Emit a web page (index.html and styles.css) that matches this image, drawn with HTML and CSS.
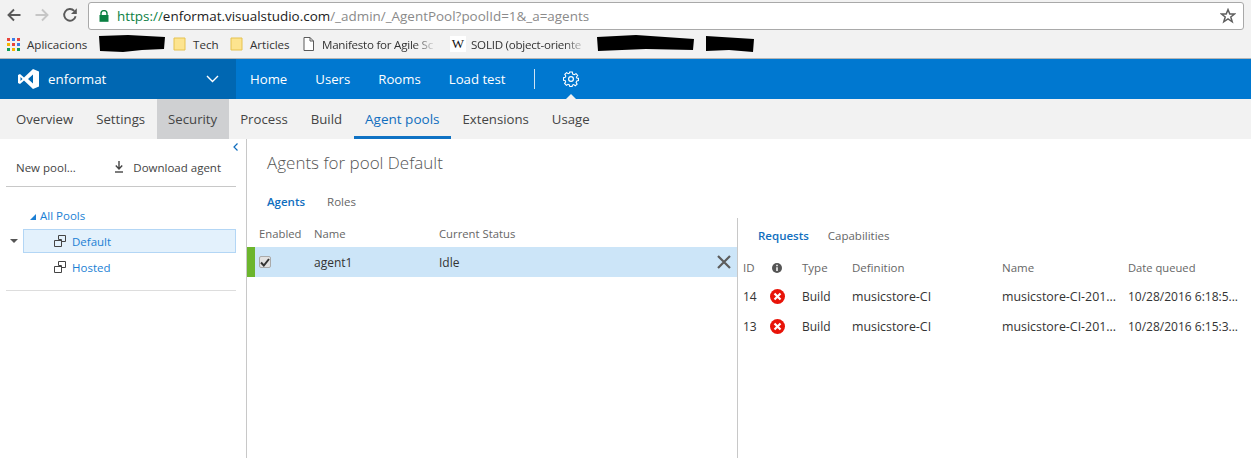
FILE: index.html
```html
<!DOCTYPE html>
<html lang="en">
<head>
    <meta charset="UTF-8">
    <title>Agents for pool Default</title>
    <link rel="stylesheet" href="styles.css">
</head>
<body>
    <!-- Browser toolbar -->
    <div class="toolbar">
        <svg class="tool-icon" width="16" height="16" viewBox="0 0 16 16"><path d="M14.5 8H2.5M8 2.5L2.5 8L8 13.5" fill="none" stroke="#5a5a5a" stroke-width="1.9"/></svg>
        <svg class="tool-icon" width="16" height="16" viewBox="0 0 16 16"><path d="M1.5 8H13.5M8 2.5L13.5 8L8 13.5" fill="none" stroke="#c6c6c6" stroke-width="1.9"/></svg>
        <svg class="tool-icon" width="16" height="16" viewBox="0 0 16 16"><path d="M13.6 9.2A5.8 5.8 0 1 1 12.2 3.9" fill="none" stroke="#5a5a5a" stroke-width="1.9"/><path d="M14.8 1.2V7H9Z" fill="#5a5a5a"/></svg>
        <div class="omnibox">
            <svg class="lock" width="10" height="12" viewBox="0 0 10 12"><path d="M2 5.5V3.6a3 3 0 0 1 6 0V5.5" fill="none" stroke="#0b8043" stroke-width="1.4"/><rect x="0.5" y="5" width="9" height="6.8" fill="#0b8043"/></svg>
            <span class="url"><span class="scheme">https://</span><span class="host">enformat.visualstudio.com</span>/_admin/_AgentPool?poolId=1&amp;_a=agents</span>
            <svg class="star" width="16" height="16" viewBox="0 0 16 16"><path d="M8 1.6L9.8 6H14.6L10.8 9L12.2 13.8L8 11L3.8 13.8L5.2 9L1.4 6H6.2Z" fill="none" stroke="#5f5f5f" stroke-width="1.5"/></svg>
        </div>
    </div>

    <!-- Bookmarks -->
    <div class="bookmarks">
        <svg class="apps" width="13" height="13" viewBox="0 0 13 13">
            <rect width="3" height="3" fill="#e8453c"/><rect x="5" width="3" height="3" fill="#3b7de8"/><rect x="10" width="3" height="3" fill="#e8453c"/>
            <rect y="5" width="3" height="3" fill="#f4b400"/><rect x="5" y="5" width="3" height="3" fill="#e8453c"/><rect x="10" y="5" width="3" height="3" fill="#3b7de8"/>
            <rect y="10" width="3" height="3" fill="#0f9d58"/><rect x="5" y="10" width="3" height="3" fill="#f4b400"/><rect x="10" y="10" width="3" height="3" fill="#0f9d58"/>
        </svg>
        <span class="bm bm-apps">Aplicacions</span>
        <svg class="scribble s1" width="68" height="20" viewBox="0 0 68 20"><path d="M1 2L30 1L67 3L66 15L44 16L25 18L2 17Z"/></svg>
        <svg class="folder f1" width="13" height="14" viewBox="0 0 13 14"><path d="M1 1H12V13H1Z" fill="#fde48f" stroke="#e6c24f"/></svg>
        <span class="bm bm-tech">Tech</span>
        <svg class="folder f2" width="13" height="14" viewBox="0 0 13 14"><path d="M1 1H12V13H1Z" fill="#fde48f" stroke="#e6c24f"/></svg>
        <span class="bm bm-articles">Articles</span>
        <svg class="page" width="11" height="14" viewBox="0 0 11 14"><path d="M1 .5H7L10.500 4V13.500H1ZM7 .5V4H10.500" fill="#fff" stroke="#5a5a5a"/></svg>
        <span class="bm bm-fade bm-manifesto">Manifesto for Agile Sc</span>
        <span class="wiki">W</span>
        <span class="bm bm-fade bm-solid">SOLID (object-oriente</span>
        <svg class="scribble s2" width="100" height="18" viewBox="0 0 100 18"><path d="M1 2L40 0L98 4L97 15L50 14L2 16Z"/></svg>
        <svg class="scribble s3" width="50" height="18" viewBox="0 0 50 18"><path d="M1 1L49 4L48 17L24 15L1 16Z"/></svg>
    </div>

    <!-- Main nav -->
    <div class="topnav">
        <div class="account">
            <svg class="vs-logo" width="21" height="20" viewBox="0 0 21 20"><path d="M15 0L21 2.500V17.500L15 20L6 11.500L2 15L0 14V6L2 5L6 8.500ZM15 5.500L10 10L15 14.500ZM2.500 8V12L4.500 10Z" fill="#fff" fill-rule="evenodd"/></svg>
            <span class="account-name">enformat</span>
            <svg class="account-chevron" width="13" height="8" viewBox="0 0 13 8"><path d="M1 1L6.500 6.500L12 1" fill="none" stroke="#fff" stroke-width="1.4"/></svg>
        </div>
        <a class="topnav-item">Home</a>
        <a class="topnav-item">Users</a>
        <a class="topnav-item">Rooms</a>
        <a class="topnav-item">Load test</a>
        <span class="topnav-sep"></span>
        <div class="topnav-gear">
            <svg width="16" height="16" viewBox="0 0 16 16"><circle cx="8" cy="8" r="2.400" fill="none" stroke="#fff" stroke-width="1.200"/><path d="M6.700 1H9.300L9.700 3L11.300 3.700L13 2.600L14.700 4.500L13.400 6L14 7.200L15.500 7.200V9.600L13.800 10L13.100 11.400L14.100 13.100L12.300 14.700L10.700 13.600L9.400 14.100L9.100 15.500H6.800L6.400 13.900L5 13.300L3.400 14.300L1.600 12.500L2.700 10.900L2.100 9.500L.5 9.200V6.800L2.200 6.400L2.800 5L1.800 3.400L3.600 1.600L5.200 2.700L6.400 2.200Z" fill="none" stroke="#fff" stroke-width="1.100"/></svg>
        </div>
    </div>

    <!-- Sub nav -->
    <div class="subnav">
        <a class="subnav-item">Overview</a>
        <a class="subnav-item">Settings</a>
        <a class="subnav-item hover">Security</a>
        <a class="subnav-item">Process</a>
        <a class="subnav-item">Build</a>
        <a class="subnav-item selected">Agent pools</a>
        <a class="subnav-item">Extensions</a>
        <a class="subnav-item">Usage</a>
    </div>

    <div class="main">
        <!-- Pools tree -->
        <div class="sidebar">
            <div class="collapse"><svg width="5" height="8" viewBox="0 0 5 8"><path d="M4.500 .5L1 4L4.500 7.500" fill="none" stroke="#0f6cbd" stroke-width="1.200"/></svg></div>
            <div class="side-tools">
                <span>New pool...</span>
                <span class="download">
                    <svg width="10" height="12" viewBox="0 0 10 12"><path d="M5 0V7M1.800 4.500L5 8L8.200 4.500" fill="none" stroke="#444" stroke-width="1.400"/><path d="M1 11H9" stroke="#444" stroke-width="1.400"/></svg>
                    Download agent
                </span>
            </div>
            <div class="tree">
                <div class="tree-root"><span class="tree-arrow"></span>All Pools</div>
                <div class="tree-row selected">
                    <span class="tree-toggle"></span>
                    <svg width="12" height="12" viewBox="0 0 12 12"><path d="M4.500 .5H11.500V6.500H7.500V4.500H4.500ZM.5 5.500H7.500V11.500H.5Z" fill="none" stroke="#444"/></svg>
                    Default
                </div>
                <div class="tree-row">
                    <svg width="12" height="12" viewBox="0 0 12 12"><path d="M4.500 .5H11.500V6.500H7.500V4.500H4.500ZM.5 5.500H7.500V11.500H.5Z" fill="none" stroke="#444"/></svg>
                    Hosted
                </div>
            </div>
        </div>

        <div class="content">
            <h1 class="page-title">Agents for pool Default</h1>
            <div class="tabs tabs-agents">
                <span class="tab active">Agents</span>
                <span class="tab">Roles</span>
            </div>
            <div class="panes">
                <!-- Agents grid -->
                <div class="agents">
                    <div class="agent-head">
                        <span class="col-enabled">Enabled</span>
                        <span class="col-name">Name</span>
                        <span>Current Status</span>
                    </div>
                    <div class="agent-row">
                        <span class="col-enabled"><span class="checkbox"><svg width="10" height="9" viewBox="0 0 10 9"><path d="M1 4.500L3.800 7.500L9 1" fill="none" stroke="#333" stroke-width="2"/></svg></span></span>
                        <span class="col-name">agent1</span>
                        <span>Idle</span>
                        <svg class="row-delete" width="14" height="14" viewBox="0 0 14 14"><path d="M1 1L13 13M13 1L1 13" stroke="#5c5c5c" stroke-width="2.200"/></svg>
                    </div>
                </div>

                <!-- Requests grid -->
                <div class="requests">
                    <div class="tabs tabs-requests">
                        <span class="tab active">Requests</span>
                        <span class="tab">Capabilities</span>
                    </div>
                    <table class="req-table">
                        <tr class="req-head">
                            <th class="c-id">ID</th>
                            <th class="c-icon"><svg class="info-icon" width="10" height="10" viewBox="0 0 10 10"><circle cx="5" cy="5" r="5" fill="#555"/><path d="M5 4.200V8M5 1.800V3.200" stroke="#fff" stroke-width="1.500"/></svg></th>
                            <th class="c-type">Type</th>
                            <th class="c-def">Definition</th>
                            <th class="c-name">Name</th>
                            <th class="c-date">Date queued</th>
                        </tr>
                        <tr>
                            <td>14</td>
                            <td class="c-icon"><svg width="15" height="15" viewBox="0 0 15 15"><circle cx="7.500" cy="7.500" r="7.500" fill="#e81409"/><path d="M4.500 4.500L10.500 10.500M10.500 4.500L4.500 10.500" stroke="#fff" stroke-width="2.200"/></svg></td>
                            <td>Build</td>
                            <td class="cell-wide">musicstore-CI</td>
                            <td class="cell-wide">musicstore-CI-201...</td>
                            <td>10/28/2016 6:18:5...</td>
                        </tr>
                        <tr>
                            <td>13</td>
                            <td class="c-icon"><svg width="15" height="15" viewBox="0 0 15 15"><circle cx="7.500" cy="7.500" r="7.500" fill="#e81409"/><path d="M4.500 4.500L10.500 10.500M10.500 4.500L4.500 10.500" stroke="#fff" stroke-width="2.200"/></svg></td>
                            <td>Build</td>
                            <td class="cell-wide">musicstore-CI</td>
                            <td class="cell-wide">musicstore-CI-201...</td>
                            <td>10/28/2016 6:15:3...</td>
                        </tr>
                    </table>
                </div>
            </div>
        </div>
    </div>
</body>
</html>
```

FILE: styles.css
```css
* {
    box-sizing: border-box;
}
html, body {
    height: 100%;
}
body {
    margin: 0;
    font-family: "Open Sans", "Noto Sans", Arial, sans-serif;
    font-size: 12px;
    color: #333;
    background: #fff;
    overflow: hidden;
    display: flex;
    flex-direction: column;
}

/* Browser chrome */
.toolbar {
    height: 30px;
    background: #f2f2f2;
    display: flex;
    align-items: center;
    padding: 0 7px 0 6px;
}
.tool-icon {
    margin-right: 12px;
    flex: none;
}
.omnibox {
    flex: 1;
    height: 28px;
    margin: 2px 0 0 -2px;
    background: #fff;
    border: 1px solid #a9a9a9;
    border-radius: 3px;
    display: flex;
    align-items: center;
    padding: 0 7px 0 10px;
}
.lock {
    margin-right: 8px;
}
.url {
    font-size: 13.450px;
    color: #8a8a8a;
    flex: 1;
    white-space: nowrap;
}
.scheme {
    color: #0b8043;
}
.host {
    color: #222;
}
.bookmarks {
    height: 29px;
    background: #f2f2f2;
    border-bottom: 1px solid #b5b5b5;
    display: flex;
    align-items: center;
    padding-left: 7px;
    white-space: nowrap;
}
.bm {
    font-size: 11.600px;
    color: #333;
}
.bm-apps { margin-left: 7px; width: 71px; }
.s1 { width: 68px; }
.f1 { margin-left: 7px; }
.bm-tech { margin-left: 7px; width: 37px; }
.bm-articles { margin-left: 7px; width: 53px; }
.page { margin-left: 0; }
.bm-manifesto { margin-left: 8px; width: 115px; }
.bm-fade {
    letter-spacing: -0.25px;
    -webkit-mask-image: linear-gradient(to right, #000 80%, transparent);
    mask-image: linear-gradient(to right, #000 80%, transparent);
}
.wiki {
    width: 16px;
    height: 16px;
    margin-left: 13px;
    background: #fff;
    font-family: "Liberation Serif", serif;
    font-size: 13px;
    color: #111;
    text-align: center;
    line-height: 16px;
}
.bm-solid { margin-left: 5px; width: 116px; }
.s2 { margin-left: 9px; }
.s3 { margin-left: 9px; }

/* Main nav */
.topnav {
    height: 40px;
    background: #0078d0;
    display: flex;
    align-items: center;
    color: #fff;
}
.account {
    width: 236px;
    height: 100%;
    background: #0067b2;
    display: flex;
    align-items: center;
    padding-left: 18px;
}
.account-name {
    font-size: 13.400px;
    margin-left: 9px;
    flex: 1;
}
.account-chevron {
    margin-right: 17px;
}
.topnav-item {
    font-size: 13.200px;
    margin-left: 14px;
    margin-right: 14px;
}
.topnav-sep {
    width: 1px;
    height: 20px;
    background: #cfe3f4;
    margin-left: 14px;
}
.topnav-gear {
    position: relative;
    height: 100%;
    width: 16px;
    margin-left: 28px;
    display: flex;
    align-items: center;
}
/* little notch under the gear */
.topnav-gear::after {
    content: "";
    position: absolute;
    left: 3px;
    bottom: 0;
    border: 5px solid transparent;
    border-top: 0;
    border-bottom-color: #f2f2f2;
}

/* Sub nav */
.subnav {
    height: 40px;
    background: #f2f2f2;
    display: flex;
    padding-left: 4.500px;
}
.subnav-item {
    font-size: 13.200px;
    padding: 0 11.500px;
    line-height: 40px;
    color: #444;
}
.subnav-item.hover {
    background: #cfd0d2;
}
.subnav-item.selected {
    font-size: 13.500px;
    color: #106ebe;
    border-bottom: 3px solid #0f72c4;
}

/* Page body */
.main {
    flex: 1;
    display: flex;
    min-height: 0;
}
.sidebar {
    position: relative;
    width: 247px;
    border-right: 1px solid #c8c8c8;
    padding: 0 10px 0 6px;
}
.collapse {
    position: absolute;
    right: 8px;
    top: 4px;
    line-height: 0;
}
.side-tools {
    height: 48px;
    padding: 21px 15px 0 10px;
    border-bottom: 1px solid #c8c8c8;
    display: flex;
    justify-content: space-between;
    font-size: 11.500px;
    color: #444;
}
.download svg {
    margin-right: 6px;
    vertical-align: -1px;
}
.tree {
    padding: 16px 0 10px;
    border-bottom: 1px solid #ddd;
    color: #1b7fd4;
    font-size: 11.500px;
}
.tree-root {
    position: relative;
    height: 26px;
    line-height: 26px;
    padding-left: 34px;
}
.tree-arrow {
    position: absolute;
    left: 24px;
    top: 11px;
    border-style: solid;
    border-width: 0 0 6px 6px;
    border-color: transparent transparent #1b7fd4 transparent;
}
.tree-row {
    position: relative;
    height: 26px;
    margin-left: 17px;
    padding-left: 30px;
    display: flex;
    align-items: center;
    gap: 6px;
    border: 1px solid transparent;
}
.tree-row.selected {
    height: 24px;
    margin-bottom: 1px;
    background: #e3f1fc;
    border-color: #b3d6f5;
}
.tree-toggle {
    position: absolute;
    left: -14px;
    top: 9px;
    border-style: solid;
    border-width: 4px 4px 0;
    border-color: #555 transparent transparent;
}
.content {
    flex: 1;
    min-width: 0;
    display: flex;
    flex-direction: column;
}
.page-title {
    margin: 0;
    height: 49px;
    padding: 12px 0 0 20px;
    font-size: 17px;
    font-weight: 300;
    color: #555;
}
.tabs {
    display: flex;
    font-size: 11.500px;
    color: #666;
}
.tab.active {
    color: #106ebe;
    font-weight: 600;
}
.tabs-agents {
    height: 30px;
    padding: 6px 0 0 20px;
    gap: 22px;
}
.panes {
    flex: 1;
    display: flex;
    min-height: 0;
}
.agents {
    width: 491px;
    border-right: 1px solid #c8c8c8;
}
.agent-head, .agent-row {
    display: flex;
    align-items: center;
}
.agent-head {
    height: 29px;
    padding: 1px 0 0 12px;
    font-size: 11.300px;
    color: #666;
}
.col-enabled { width: 55px; }
.col-name { width: 125px; }
.agent-row {
    position: relative;
    height: 30px;
    padding-left: 12px;
    background: #cce5f8;
    font-size: 12px;
    color: #333;
}
/* green state bar at the row edge */
.agent-row::before {
    content: "";
    position: absolute;
    left: 0;
    top: 0;
    bottom: 0;
    width: 8px;
    background: #6cb52d;
}
.checkbox {
    width: 12px;
    height: 12px;
    background: #e2e2e2;
    border: 1px solid #aaa;
    border-radius: 2px;
    display: flex;
    align-items: center;
    justify-content: center;
}
.row-delete {
    margin-left: auto;
    margin-right: 6px;
}
.requests {
    flex: 1;
    min-width: 0;
    padding-left: 5px;
}
.tabs-requests {
    height: 36px;
    padding: 10px 0 0 15px;
    gap: 19px;
}
.req-table {
    border-collapse: collapse;
    table-layout: fixed;
    width: 508px;
    font-size: 12px;
}
.req-table th, .req-table td {
    padding: 0;
    text-align: left;
    white-space: nowrap;
    height: 30px;
}
.req-table th {
    font-weight: 400;
    font-size: 11.500px;
    color: #666;
    height: 27px;
}
.req-table th.c-date {
    font-size: 11.200px;
}
.req-table svg {
    display: block;
}
.req-table .info-icon {
    margin-left: 2px;
}
.req-table .cell-wide {
    font-size: 12.400px;
}
.c-id { width: 27px; }
.c-icon { width: 32px; }
.c-type { width: 50px; }
.c-def { width: 150px; }
.c-name { width: 126px; }
```
